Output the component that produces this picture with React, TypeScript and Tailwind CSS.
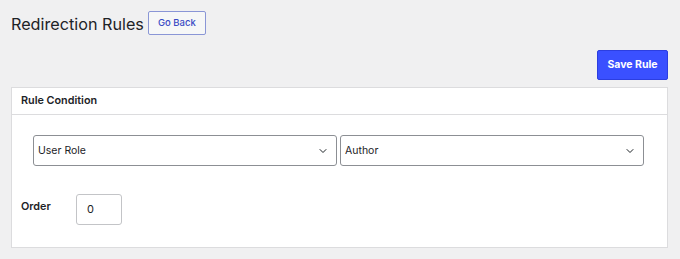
import { ChevronDown } from "lucide-react";

export default function App() {
    return (
        <div className="w-[680px] h-[259px] bg-[#f0f0f1] px-[11px] pt-[11px] text-[#1d2327] font-['Inter',sans-serif]">
            {/* Title row */}
            <div className="flex items-center gap-[4px] h-[24px]">
                <h1 className="text-[16.2px] font-normal leading-none pt-[2px]">Redirection Rules</h1>
                <button className="h-[24px] px-[9px] border border-[#8a96d6] rounded-[2px] bg-[#f6f7f7] text-[#3a4bc4] text-[9.5px] font-medium">
                    Go Back
                </button>
            </div>

            {/* Actions */}
            <div className="flex justify-end mt-[15px] pr-[1px]">
                <button className="w-[71px] h-[30px] bg-[#3a50ff] border border-[#2c3ee0] rounded-[2px] text-white text-[10.5px] font-bold">
                    Save Rule
                </button>
            </div>

            {/* Panel */}
            <div className="mt-[7px] mr-[1px] bg-white border border-[#dcdcde]">
                <div className="h-[27px] flex items-center px-[9px] border-b border-[#dcdcde]">
                    <span className="text-[10.8px] font-semibold">Rule Condition</span>
                </div>
                <div className="px-[9px] pt-[20px] pb-[22px]">
                    <div className="flex gap-[3px] pl-[12px]">
                        <Select value="User Role" />
                        <Select value="Author" />
                    </div>
                    <div className="flex items-start mt-[28px]">
                        <label className="w-[55px] pt-[5px] text-[10.8px] font-semibold">Order</label>
                        <div className="w-[46px] h-[31px] border border-[#c3c4c7] rounded-[3px] flex items-center px-[10px] text-[11px]">
                            0
                        </div>
                    </div>
                </div>
            </div>
        </div>
    );
}

function Select({ value }: { value: string }) {
    return (
        <div className="w-[304px] h-[31px] border border-[#8c8f94] rounded-[3px] flex items-center justify-between pl-[4px] pr-[7px] text-[10.5px]">
            <span>{value}</span>
            <ChevronDown size={12} strokeWidth={2} />
        </div>
    );
}
